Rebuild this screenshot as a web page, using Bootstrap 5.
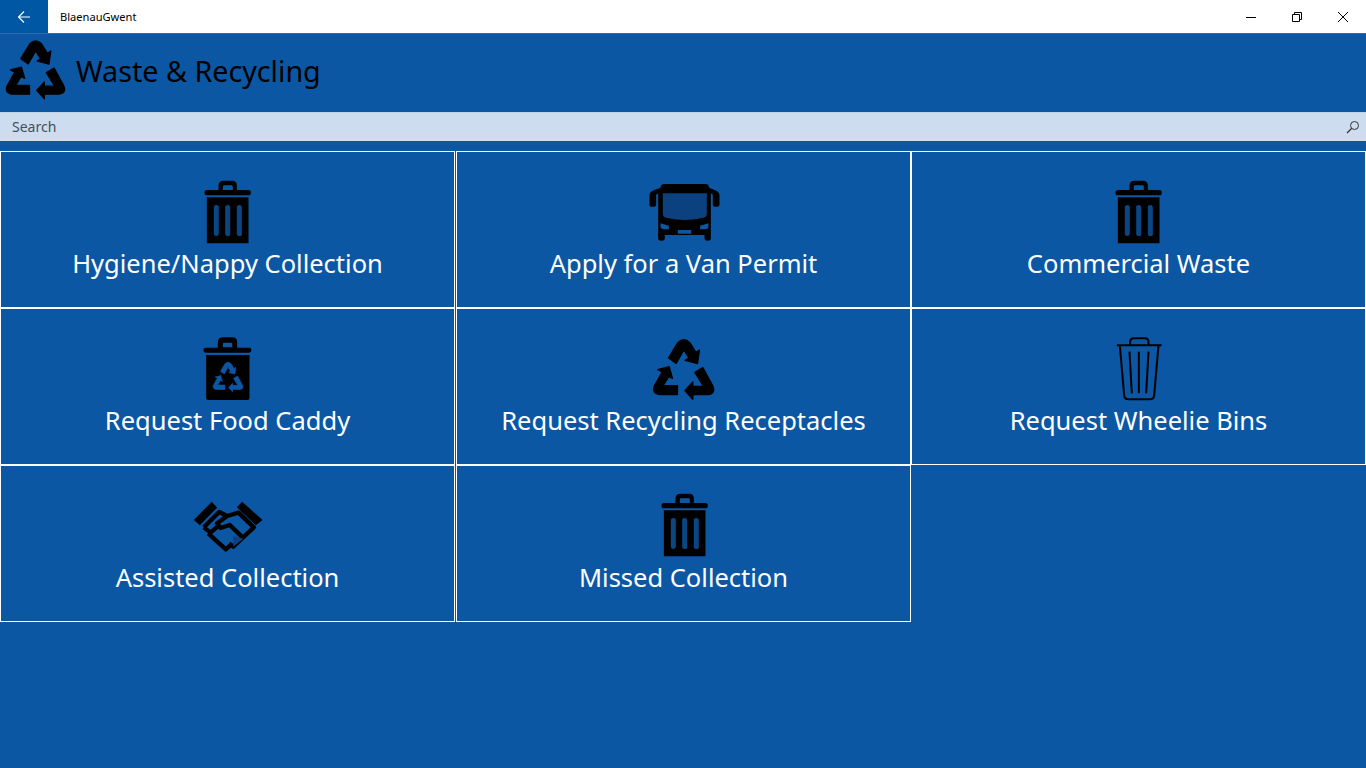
<!DOCTYPE html>
<html lang="en">
<head>
<meta charset="utf-8">
<title>BlaenauGwent</title>
<link href="https://cdn.jsdelivr.net/npm/bootstrap@5.3.0/dist/css/bootstrap.min.css" rel="stylesheet">
<style>
html,body{height:100%}
body{background:#0b57a4;font-family:"Noto Sans","Open Sans",sans-serif;overflow:hidden;color:#fff}
.app-titlebar{height:33px;background:#fff;color:#000;font-size:11.1px}
.app-back{width:48px;height:33px;background:#0058a5}
.app-name{margin-left:12px;margin-top:2px}
.win-btn{width:46px;height:33px;display:flex;align-items:center;justify-content:center}
.app-head{height:79px;padding-left:4px;border-top:1px solid #2a6cb0}
.app-head>svg{margin-bottom:8px;overflow:visible}
.app-head h1{font-size:28.7px;font-weight:400;color:#000;margin:0 0 3px 9px;line-height:1}
.app-search{height:29px;background:#cddcee;color:#44505c;font-size:14px;padding:0 6px 0 12px;border-top:1px solid #c0d2e8}
.app-search span{margin-bottom:2px}
.tile-grid{margin-top:10px;display:grid;grid-template-columns:456px 455px 455px;grid-auto-rows:157px}
.tile{border:1px solid #fff;padding-top:18px;text-align:center;background:#0b57a4}
.tile-a{margin-right:1px}
.tile svg{display:block;margin:0 auto}
.tile-label{font-size:25.5px;line-height:26px;white-space:nowrap}
.ink{fill:#000;stroke:#000}
.hole{fill:#0b57a4;stroke:#0b57a4}
.rec-shape{stroke-width:4;stroke-linejoin:round}
</style>
</head>
<body>
<svg width="0" height="0" class="position-absolute">
<defs>
<symbol id="rec" viewBox="50 20 195 195" overflow="visible">
<g class="rec-shape">
<path d="M102 84 L130 38 Q148 20 166 38 L184 67 L195 60 L189 101 L152 91 L163 84 L148 60 L125 100 Z"/>
<path d="M70 119 L104 110 L114 145 L103 139 L86 167 L129 167 L129 194 L76 194 Q50 190 60 167 L83 126 Z"/>
<path d="M205 113 L234 166 Q246 190 220 194 L175 194 L175 208 L151 182 L175 156 L175 169 L207 169 L181 127 Z"/>
</g>
</symbol>
<symbol id="trash" viewBox="0 0 300 240">
<path fill="#0a4684" d="M100 100H190V200H100Z"/>
<path fill="#000" fill-rule="evenodd" d="M132 32H158Q172 32 172 46V60H207Q214 60 214 68T207 76H82Q75 76 75 68T82 60H117V46Q117 32 132 32ZM134 46Q130 46 130 50V60H160V50Q160 46 156 46ZM82 82H207V220H82ZM110 105Q103 105 103 112V191Q103 198 110 198T118 191V112Q118 105 110 105ZM145 105Q137 105 137 112V191Q137 198 145 198T152 191V112Q152 105 145 105ZM180 105Q172 105 172 112V191Q172 198 180 198T187 191V112Q187 105 180 105Z"/>
</symbol>
</defs>
</svg>

<div class="app-titlebar d-flex align-items-center">
  <div class="app-back d-flex align-items-center justify-content-center">
    <svg width="16" height="14" viewBox="0 0 16 14" fill="none" stroke="#fff" stroke-width="1.1"><path d="M14 7H2.5M8 1.5 2.5 7 8 12.5"/></svg>
  </div>
  <span class="app-name">BlaenauGwent</span>
  <div class="ms-auto d-flex">
    <div class="win-btn"><svg width="12" height="12" viewBox="0 0 12 12" stroke="#000"><path d="M1 6.5H11"/></svg></div>
    <div class="win-btn"><svg width="12" height="12" viewBox="0 0 12 12" fill="none" stroke="#000"><path d="M1.5 3.5H8.5V10.5H1.5ZM3.5 3.5V1.5H10.5V8.5H8.5"/></svg></div>
    <div class="win-btn"><svg width="12" height="12" viewBox="0 0 12 12" stroke="#000"><path d="M1 1 11 11M11 1 1 11"/></svg></div>
  </div>
</div>

<header class="app-head d-flex align-items-center">
  <svg width="63" height="63" class="ink"><use href="#rec"/></svg>
  <h1>Waste &amp; Recycling</h1>
</header>

<div class="app-search d-flex align-items-center justify-content-between">
  <span>Search</span>
  <svg width="14" height="14" viewBox="0 0 14 14" fill="none" stroke="#333"><circle cx="8.5" cy="5.5" r="4"/><path d="M5.5 8.5 1 13" stroke-width="1.3"/></svg>
</div>

<main class="tile-grid">
  <div class="tile tile-a">
    <svg width="100" height="80" viewBox="-4.5 0 300 240"><use href="#trash"/></svg>
    <div class="tile-label">Hygiene/Nappy Collection</div>
  </div>
  <div class="tile">
    <svg width="100" height="80" viewBox="-4.5 0 300 240">
      <path fill="#000" d="M84 42H212Q218 42 222 54L232 58Q252 64 252 76V104Q252 110 245 110H238Q232 110 232 104V74L226 70V195V205Q226 212 218 212H214Q207 212 207 205V195H88V205Q88 212 80 212H76Q68 212 68 205V195V70L62 74V104Q62 110 56 110H48Q42 110 42 104V76Q42 64 62 58L74 54Q78 42 84 42Z"/>
      <path d="M82 70H214V132Q214 142 200 144Q148 156 96 144Q82 142 82 132Z" fill="#0b417f"/>
      <path fill="#0b57a4" d="M75 160 100 167V178H86Q75 178 75 168ZM219 160 194 167V178H208Q219 178 219 168ZM127 180H167V191H127Z"/>
    </svg>
    <div class="tile-label">Apply for a Van Permit</div>
  </div>
  <div class="tile">
    <svg width="100" height="80" viewBox="-4.5 0 300 240"><use href="#trash"/></svg>
    <div class="tile-label">Commercial Waste</div>
  </div>

  <div class="tile tile-a">
    <svg width="100" height="80" viewBox="-4.5 -9 300 240">
      <path fill="#000" fill-rule="evenodd" d="M130 22H158Q173 22 173 37V53H209Q216 53 216 60T209 68H79Q72 68 72 60T79 53H115V37Q115 22 130 22ZM134 38Q130 38 130 42V52H158V42Q158 38 154 38ZM80 75H210V204Q210 210 204 210H86Q80 210 80 204Z"/>
      <svg x="97" y="92" width="97" height="97" class="hole"><use href="#rec"/></svg>
    </svg>
    <div class="tile-label">Request Food Caddy</div>
  </div>
  <div class="tile">
    <svg width="100" height="80" viewBox="-1.5 -9 300 240">
      <svg x="50" y="20" width="195" height="195" class="ink"><use href="#rec"/></svg>
    </svg>
    <div class="tile-label">Request Recycling Receptacles</div>
  </div>
  <div class="tile">
    <svg width="100" height="80" viewBox="-1.5 -9 300 240" fill="none" stroke="#000" stroke-width="6">
      <path d="M82 46H216M122 45V36Q122 25 133 25H166Q177 25 177 36V45M91 46 104 196Q105 208 118 208H180Q193 208 194 196L207 46M120 65 127 190M148 65V190M177 65 170 190"/>
    </svg>
    <div class="tile-label">Request Wheelie Bins</div>
  </div>

  <div class="tile tile-a">
    <svg width="100" height="80" viewBox="-5.5 -18 300 240" fill="none" stroke="#000" stroke-width="13" stroke-linejoin="round">
      <path fill="#000" stroke="none" d="M42 90 96 35 112 53 60 106ZM187 35 248 90 228 106 171 52Z"/>
      <path d="M72 112 118 66 142 78 176 68 222 112 160 170 148 160M142 78 112 100 122 114 150 105 192 146"/>
      <path d="M72 112 92 128M85 130 138 178 154 164M115 108 92 128"/>
      <path d="M160 137 190 146 160 170Z" fill="#0b417f" stroke="none"/>
    </svg>
    <div class="tile-label">Assisted Collection</div>
  </div>
  <div class="tile">
    <svg width="100" height="80" viewBox="-7.5 3 300 240"><use href="#trash"/></svg>
    <div class="tile-label">Missed Collection</div>
  </div>
</main>
<script src="https://cdn.jsdelivr.net/npm/bootstrap@5.3.0/dist/js/bootstrap.bundle.min.js"></script>
</body>
</html>
